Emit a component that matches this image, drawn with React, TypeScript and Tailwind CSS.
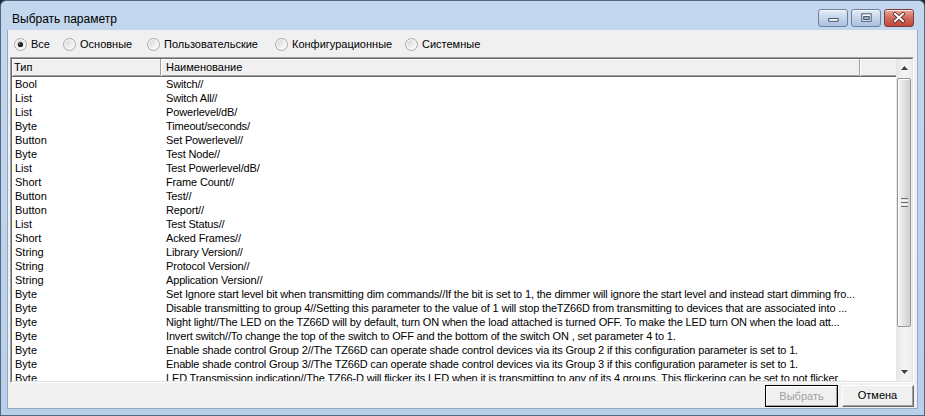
import React from 'react';

const rows: [string, string][] = [
  ['Bool', 'Switch//'],
  ['List', 'Switch All//'],
  ['List', 'Powerlevel/dB/'],
  ['Byte', 'Timeout/seconds/'],
  ['Button', 'Set Powerlevel//'],
  ['Byte', 'Test Node//'],
  ['List', 'Test Powerlevel/dB/'],
  ['Short', 'Frame Count//'],
  ['Button', 'Test//'],
  ['Button', 'Report//'],
  ['List', 'Test Status//'],
  ['Short', 'Acked Frames//'],
  ['String', 'Library Version//'],
  ['String', 'Protocol Version//'],
  ['String', 'Application Version//'],
  [
    'Byte',
    'Set Ignore start level bit when transmitting dim commands//If the bit is set to 1, the dimmer will ignore the start level and instead start dimming fro...',
  ],
  [
    'Byte',
    'Disable transmitting to group 4//Setting this parameter to the value of 1 will stop theTZ66D from transmitting to devices that are associated into ...',
  ],
  [
    'Byte',
    'Night light//The LED on the TZ66D will by default, turn ON when the load attached is turned OFF. To make the LED turn ON when the load att...',
  ],
  [
    'Byte',
    'Invert switch//To change the top of the switch to OFF and the bottom of the switch ON , set parameter 4 to 1.',
  ],
  [
    'Byte',
    'Enable shade control Group 2//The TZ66D can operate shade control devices via its Group 2 if this configuration parameter is set to 1.',
  ],
  [
    'Byte',
    'Enable shade control Group 3//The TZ66D can operate shade control devices via its Group 3 if this configuration parameter is set to 1.',
  ],
  [
    'Byte',
    'LED Transmission indication//The TZ66-D will flicker its LED when it is transmitting to any of its 4 groups. This flickering can be set to not flicker...',
  ],
];

const Radio = ({ checked, label, w }: { checked?: boolean; label: string; w: string }) => (
  <div className={`flex items-center gap-[4px] ${w}`}>
    <svg width="13" height="13" viewBox="0 0 13 13" className="shrink-0">
      <defs>
        <linearGradient id="rg" x1="0" y1="0" x2="1" y2="1">
          <stop offset="0" stopColor="#d4d4d4" />
          <stop offset="1" stopColor="#ffffff" />
        </linearGradient>
      </defs>
      <circle cx="6.5" cy="6.5" r="6" fill="#f6f6f6" stroke="#a8a8a8" />
      <circle cx="6.5" cy="6.5" r="4.2" fill="url(#rg)" />
      {checked && (
        <>
          <circle cx="6.5" cy="6.5" r="2.6" fill="#1f1f1f" />
          <circle cx="5.8" cy="5.8" r="0.9" fill="#6a6a6a" />
        </>
      )}
    </svg>
    <span className="whitespace-nowrap">{label}</span>
  </div>
);

const CaptionButton = ({ kind }: { kind: 'min' | 'max' | 'close' }) => {
  const base =
    'w-[30px] h-[18px] rounded-[3px] border flex items-center justify-center shadow-[inset_0_1px_0_rgba(255,255,255,0.7)]';
  const skin =
    kind === 'close'
      ? 'border-[#7a3b36] bg-gradient-to-b from-[#e9a99c] via-[#d26a5c] to-[#c4473a]'
      : 'border-[#6f819a] bg-gradient-to-b from-[#e3ecf7] via-[#c5d6ec] to-[#a9c0df]';
  return (
    <div className={`${base} ${skin}`}>
      <svg width="30" height="18" viewBox="0 0 30 18">
        {kind === 'min' && (
          <rect x="10.5" y="9.5" width="10" height="3" fill="#ffffff" stroke="#3a4a60" />
        )}
        {kind === 'max' && (
          <>
            <rect x="10.5" y="4.5" width="10" height="8" fill="#ffffff" stroke="#3a4a60" />
            <rect x="12.5" y="7.5" width="6" height="3" fill="#9fb5d3" stroke="#3a4a60" />
          </>
        )}
        {kind === 'close' && (
          <>
            <path d="M10.5 4.5 L19.5 12.5 M19.5 4.5 L10.5 12.5" stroke="#5a2a26" strokeWidth="4" strokeLinecap="round" />
            <path d="M10.5 4.5 L19.5 12.5 M19.5 4.5 L10.5 12.5" stroke="#ffffff" strokeWidth="2.2" strokeLinecap="round" />
          </>
        )}
      </svg>
    </div>
  );
};

const Arrow = ({ up }: { up?: boolean }) => (
  <svg width="7" height="4" viewBox="0 0 7 4">
    <path d={up ? 'M0 4 L3.5 0 L7 4 Z' : 'M0 0 L7 0 L3.5 4 Z'} fill="#404040" />
  </svg>
);

export default function App() {
  return (
    <div className="w-[925px] h-[416px] bg-[#1d2633] overflow-hidden font-['Liberation_Sans',Arial,sans-serif] text-black">
      <div className="w-full h-full flex flex-col rounded-t-[6px] border border-[#55677f] bg-gradient-to-b from-[#c3d7ee] to-[#b9d0ea]">
        {/* title bar */}
        <div className="h-[29px] flex items-start">
          <div className="pl-[11px] pt-[11px] text-[12px] leading-[15px]">Выбрать параметр</div>
          <div className="ml-auto mr-[10px] mt-[8px] flex gap-[3px]">
            <CaptionButton kind="min" />
            <CaptionButton kind="max" />
            <CaptionButton kind="close" />
          </div>
        </div>

        {/* client */}
        <div className="ml-[6px] w-[911px] h-[379px] border-x border-b border-[#93a9c6] bg-[#f0f0f0] flex flex-col text-[11px]">
          <div className="h-[27px] flex items-center pl-[6px] pt-[1px]">
            <Radio checked label="Все" w="w-[49px]" />
            <Radio label="Основные" w="w-[84px]" />
            <Radio label="Пользовательские" w="w-[128px]" />
            <Radio label="Конфигурационные" w="w-[130px]" />
            <Radio label="Системные" w="w-[90px]" />
          </div>

          <div className="ml-[2px] w-[904px] h-[326px] border border-t-[#a0a0a0] border-l-[#a0a0a0] border-r-white border-b-white">
            <div className="w-full h-full border border-t-[#696969] border-l-[#696969] border-r-[#e3e3e3] border-b-[#e3e3e3] flex bg-white">
              <div className="w-[884px] h-full flex flex-col overflow-hidden">
                <div className="h-[18px] shrink-0 flex bg-[#f0f0f0] border-b border-[#696969] shadow-[inset_0_-1px_0_#a0a0a0]">
                  <div className="w-[149px] pl-[2px] leading-[17px] border-r border-[#a0a0a0] shadow-[inset_1px_1px_0_#ffffff]">
                    Тип
                  </div>
                  <div className="w-[699px] pl-[5px] leading-[17px] border-r border-[#a0a0a0] shadow-[inset_1px_1px_0_#ffffff]">
                    Наименование
                  </div>
                  <div className="flex-1 shadow-[inset_1px_1px_0_#ffffff]" />
                </div>
                <div className="flex-1 overflow-hidden">
                  {rows.map(([t, n], i) => (
                    <div key={i} className="h-[14px] flex leading-[14px] whitespace-nowrap">
                      <div className="w-[149px] pl-[3px] overflow-hidden">{t}</div>
                      <div className="w-[699px] pl-[5px] overflow-hidden tracking-[-0.16px]">{n}</div>
                    </div>
                  ))}
                </div>
              </div>

              {/* scrollbar */}
              <div className="w-[16px] h-full flex flex-col bg-gradient-to-r from-[#e6e6e6] via-[#f4f4f4] to-[#ececec]">
                <div className="h-[17px] flex items-center justify-center">
                  <Arrow up />
                </div>
                <div className="flex-1 pt-[2px] pb-[36px]">
                  <div className="h-full mx-[1px] rounded-[2px] border border-[#979797] bg-gradient-to-r from-[#f4f4f4] via-[#e2e2e2] to-[#cfcfcf] shadow-[inset_1px_1px_0_#ffffff] flex flex-col items-center justify-center gap-[1px]">
                    <div className="w-[7px] h-[1px] bg-[#6c6c6c]" />
                    <div className="w-[7px] h-[1px] bg-[#f8f8f8]" />
                    <div className="w-[7px] h-[1px] bg-[#6c6c6c]" />
                    <div className="w-[7px] h-[1px] bg-[#f8f8f8]" />
                    <div className="w-[7px] h-[1px] bg-[#6c6c6c]" />
                  </div>
                </div>
                <div className="h-[18px] flex items-center justify-center">
                  <Arrow />
                </div>
              </div>
            </div>
          </div>

          <div className="mt-[2px] mr-[3px] flex justify-end gap-[4px]">
            <div className="w-[73px] h-[22px] border border-black bg-[#f0f0f0]">
              <div className="w-full h-full flex items-center justify-center text-[#a0a0a0] border border-t-white border-l-white border-r-[#a0a0a0] border-b-[#a0a0a0]">
                Выбрать
              </div>
            </div>
            <div className="w-[72px] h-[22px] border border-t-white border-l-white border-r-[#696969] border-b-[#696969] bg-[#f0f0f0]">
              <div className="w-full h-full flex items-center justify-center border-r border-b border-[#a0a0a0]">
                Отмена
              </div>
            </div>
          </div>
        </div>
      </div>
    </div>
  );
}
